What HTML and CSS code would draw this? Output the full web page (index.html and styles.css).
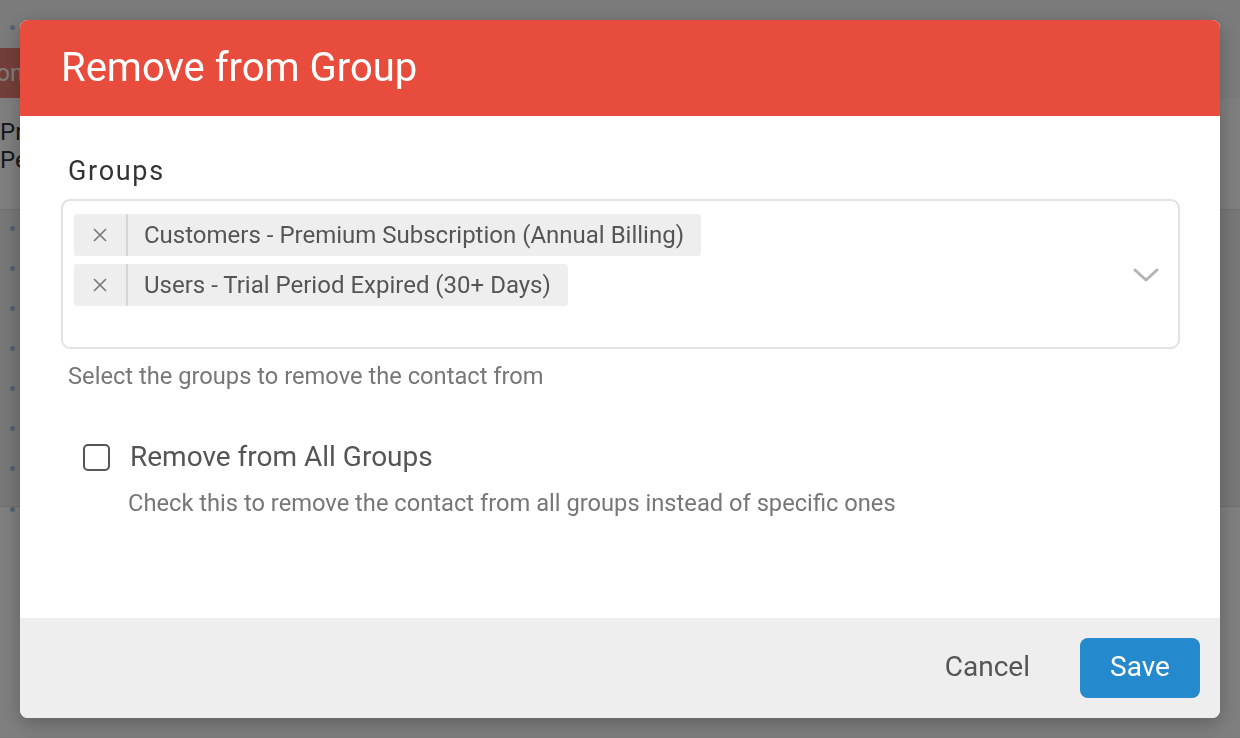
FILE: index.html
```html
<!DOCTYPE html>
<html>
<head>
<meta charset="utf-8">
<link rel="stylesheet" href="styles.css">
</head>
<body>
<div class="page">
  <div class="top-row"><span class="dot"></span></div>
  <div class="btn-row"><span class="bg-btn">Add to Group Option</span></div>
  <div class="info">
    <div class="info-line">Pr</div>
    <div class="info-line">Pe</div>
  </div>
  <ul class="list">
    <li><span class="dot"></span></li>
    <li><span class="dot"></span></li>
    <li><span class="dot"></span></li>
    <li><span class="dot"></span></li>
    <li><span class="dot"></span></li>
    <li><span class="dot"></span></li>
    <li><span class="dot"></span></li>
  </ul>
  <div class="list-end"><span class="dot"></span></div>
</div>

<div class="overlay">
  <div class="modal">
    <div class="modal-header">
      <h1 class="modal-title">Remove from Group</h1>
    </div>
    <div class="modal-body">
      <div class="field-label">Groups</div>
      <div class="select">
        <div class="tags">
          <div class="tag">
            <span class="tag-remove"><svg width="16" height="16" viewBox="0 0 16 16"><path d="M2 2 L14 14 M14 2 L2 14" stroke="#777" stroke-width="1.6" fill="none"/></svg></span>
            <span class="tag-text">Customers - Premium Subscription (Annual Billing)</span>
          </div>
          <div class="tag">
            <span class="tag-remove"><svg width="16" height="16" viewBox="0 0 16 16"><path d="M2 2 L14 14 M14 2 L2 14" stroke="#777" stroke-width="1.6" fill="none"/></svg></span>
            <span class="tag-text">Users - Trial Period Expired (30+ Days)</span>
          </div>
        </div>
        <span class="chevron"><svg width="28" height="16" viewBox="0 0 28 16"><path d="M3 3 L14 13 L25 3" stroke="#b4b4b4" stroke-width="3" fill="none" stroke-linecap="round" stroke-linejoin="round"/></svg></span>
      </div>
      <div class="help">Select the groups to remove the contact from</div>
      <div class="check-row">
        <span class="checkbox"></span>
        <span class="check-label">Remove from All Groups</span>
      </div>
      <div class="check-help">Check this to remove the contact from all groups instead of specific ones</div>
    </div>
    <div class="modal-footer">
      <button class="btn-cancel">Cancel</button>
      <button class="btn-save">Save</button>
    </div>
  </div>
</div>
</body>
</html>
```
FILE: styles.css
```css
html, body {
  margin: 0;
  padding: 0;
  height: 100%;
}
body {
  font-family: Roboto, "Liberation Sans", sans-serif;
  background: #f6f6f6;
  overflow: hidden;
}
.page {
  width: 1240px;
  height: 738px;
  overflow: hidden;
}
.dot {
  display: block;
  width: 5px;
  height: 5px;
  border-radius: 50%;
  background: #a9c4de;
  margin-left: 10px;
}
.top-row {
  height: 48px;
  padding-top: 25px;
  box-sizing: border-box;
}
.btn-row {
  height: 50px;
  overflow: hidden;
  display: flex;
}
.bg-btn {
  display: flex;
  align-items: center;
  height: 50px;
  background: #e74c3c;
  color: #fff;
  font-size: 24px;
  padding: 0 20px;
  margin-left: -214px;
  white-space: nowrap;
  opacity: 0.7;
}
.info {
  height: 112px;
  background: #fff;
  padding-top: 20px;
  box-sizing: border-box;
  border-bottom: 1px solid #e2e2e2;
}
.info-line {
  font-size: 24px;
  line-height: 28px;
  color: #333;
}
.list {
  list-style: none;
  margin: 0;
  padding: 16px 0 0;
  background: #f0f0f0;
  height: 297px;
  box-sizing: border-box;
  border-bottom: 1px solid #e0e0e0;
}
.list li {
  height: 40px;
}
.list-end {
  background: #fff;
  height: 230px;
}

.overlay {
  position: fixed;
  inset: 0;
  background: rgba(0, 0, 0, 0.5);
  padding: 20px;
  box-sizing: border-box;
  display: flex;
}
.modal {
  flex: 1;
  background: #fff;
  border-radius: 8px;
  overflow: hidden;
  display: flex;
  flex-direction: column;
  box-shadow: 0 6px 20px rgba(0, 0, 0, 0.25);
}
.modal-header {
  height: 96px;
  background: #e74c3c;
  display: flex;
  align-items: center;
  padding-left: 41px;
  padding-bottom: 2px;
  box-sizing: border-box;
  flex-shrink: 0;
}
.modal-title {
  margin: 0;
  font-weight: 400;
  font-size: 40px;
  color: #fff;
}
.modal-body {
  flex: 1;
  padding: 40px 40px 0 41px;
}
.field-label {
  font-size: 27px;
  line-height: 30px;
  color: #333;
  letter-spacing: 1.7px;
  padding-left: 7px;
  margin-bottom: 13px;
}
.select {
  height: 150px;
  box-sizing: border-box;
  border: 2px solid #e2e2e2;
  border-radius: 9px;
  padding: 13px 18px 0 11px;
  display: flex;
  align-items: flex-start;
}
.tags {
  flex: 1;
  display: flex;
  flex-direction: column;
  align-items: flex-start;
  gap: 8px;
}
.tag {
  display: flex;
  align-items: stretch;
  height: 42px;
  background: #eeeeee;
  border-radius: 3px;
}
.tag-remove {
  width: 52px;
  border-right: 2px solid #d6d6d6;
  display: flex;
  align-items: center;
  justify-content: center;
}
.tag-text {
  display: flex;
  align-items: center;
  padding: 0 17px 0 16px;
  font-size: 24px;
  color: #555;
}
.chevron {
  margin-top: 53px;
  display: block;
  line-height: 0;
}
.help {
  font-size: 23.7px;
  line-height: 28px;
  color: #777;
  padding-left: 7px;
  margin-top: 13px;
}
.check-row {
  display: flex;
  align-items: center;
  gap: 20px;
  margin-top: 50px;
  padding-left: 22px;
}
.checkbox {
  width: 27px;
  height: 27px;
  box-sizing: border-box;
  border: 2.5px solid #555;
  border-radius: 5px;
}
.check-label {
  font-size: 28px;
  line-height: 34px;
  color: #555;
}
.check-help {
  font-size: 23.7px;
  line-height: 28px;
  color: #777;
  padding-left: 67px;
  margin-top: 15px;
}
.modal-footer {
  height: 100px;
  flex-shrink: 0;
  background: #eeeeee;
  display: flex;
  align-items: center;
  justify-content: flex-end;
  gap: 14px;
  padding-right: 20px;
}
button {
  font-family: Roboto, "Liberation Sans", sans-serif;
  border: none;
  cursor: pointer;
}
.btn-cancel {
  background: transparent;
  color: #555;
  font-size: 28px;
  padding: 0 36px 4px;
  height: 60px;
}
.btn-save {
  background: #2589cd;
  color: #fff;
  font-size: 28px;
  width: 120px;
  height: 60px;
  padding: 0 0 4px;
  border-radius: 8px;
}
```
